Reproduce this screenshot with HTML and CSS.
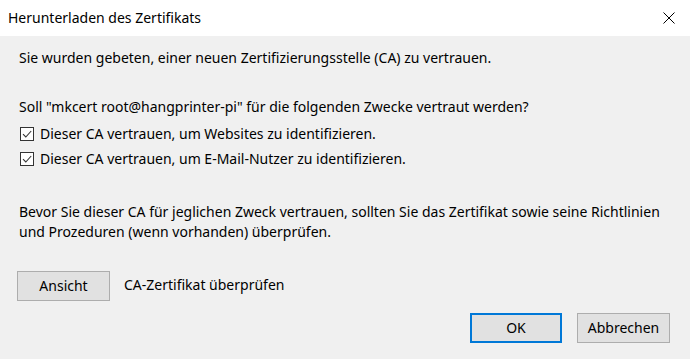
FILE: index.html
```html
<!DOCTYPE html>
<html lang="de">
<head>
<meta charset="utf-8">
<link rel="stylesheet" href="styles.css">
</head>
<body>
<div class="dialog">
  <div class="titlebar">
    <span class="title">Herunterladen des Zertifikats</span>
    <svg class="close" width="12" height="12" viewBox="0 0 12 12"><path d="M0.5 0.5 L11.5 11.5 M11.5 0.5 L0.5 11.5" stroke="#000" stroke-width="1" fill="none"/></svg>
  </div>
  <div class="content">
    <p class="intro">Sie wurden gebeten, einer neuen Zertifizierungsstelle (CA) zu vertrauen.</p>
    <p class="question">Soll "mkcert root@hangprinter-pi" für die folgenden Zwecke vertraut werden?</p>
    <label class="check"><span class="box"><svg width="12" height="12" viewBox="0 0 12 12"><path d="M2 6.2 L4.8 9 L10.2 3" stroke="#333" stroke-width="1.1" fill="none"/></svg></span>Dieser CA vertrauen, um Websites zu identifizieren.</label>
    <label class="check"><span class="box"><svg width="12" height="12" viewBox="0 0 12 12"><path d="M2 6.2 L4.8 9 L10.2 3" stroke="#333" stroke-width="1.1" fill="none"/></svg></span>Dieser CA vertrauen, um E-Mail-Nutzer zu identifizieren.</label>
    <p class="warning">Bevor Sie dieser CA für jeglichen Zweck vertrauen, sollten Sie das Zertifikat sowie seine Richtlinien und Prozeduren (wenn vorhanden) überprüfen.</p>
    <div class="view-row">
      <button class="btn">Ansicht</button>
      <span class="view-label">CA-Zertifikat überprüfen</span>
    </div>
    <div class="actions">
      <button class="btn btn-default">OK</button>
      <button class="btn">Abbrechen</button>
    </div>
  </div>
</div>
</body>
</html>
```
FILE: styles.css
```css
* { box-sizing: border-box; }
html, body { margin: 0; padding: 0; }
body {
  background: #f0f0f0;
  font-family: "Segoe UI", "Noto Sans", "Open Sans", sans-serif;
  font-size: 14px;
  line-height: 20px;
  color: #000;
  width: 690px;
  height: 359px;
  overflow: hidden;
}
.titlebar {
  height: 36px;
  background: #fff;
  display: flex;
  align-items: center;
  justify-content: space-between;
  padding: 0 15px 0 8px;
}
.title { font-size: 14px; margin-top: -1px; }
.close { display: block; }
.content {
  padding: 0 20px 0 19px;
  display: flex;
  flex-direction: column;
}
p { margin: 0; }
.intro { margin-top: 12px; }
.question { margin-top: 29px; }
.check {
  display: flex;
  align-items: center;
  margin-top: 9px;
  height: 16px;
  line-height: 20px;
}
.check + .check { margin-top: 9px; }
.box {
  width: 14px;
  height: 14px;
  border: 1px solid #333;
  background: #fff;
  margin: 0 6px 0 1px;
  display: flex;
  align-items: center;
  justify-content: center;
}
.box svg { display: block; }
.warning { margin-top: 35px; }
.view-row {
  display: flex;
  align-items: center;
  margin-top: 29px;
  margin-left: -2px;
  gap: 14px;
}
.view-label { margin-top: -2px; }
.btn {
  font: inherit;
  color: #000;
  width: 93px;
  height: 30px;
  background: #e1e1e1;
  border: 1px solid #adadad;
  padding: 0;
  margin: 0;
  line-height: 26px;
}
.actions {
  display: flex;
  justify-content: flex-end;
  gap: 15px;
  margin-top: 12px;
}
.btn-default { border: 2px solid #0078d7; width: 92px; }
```
